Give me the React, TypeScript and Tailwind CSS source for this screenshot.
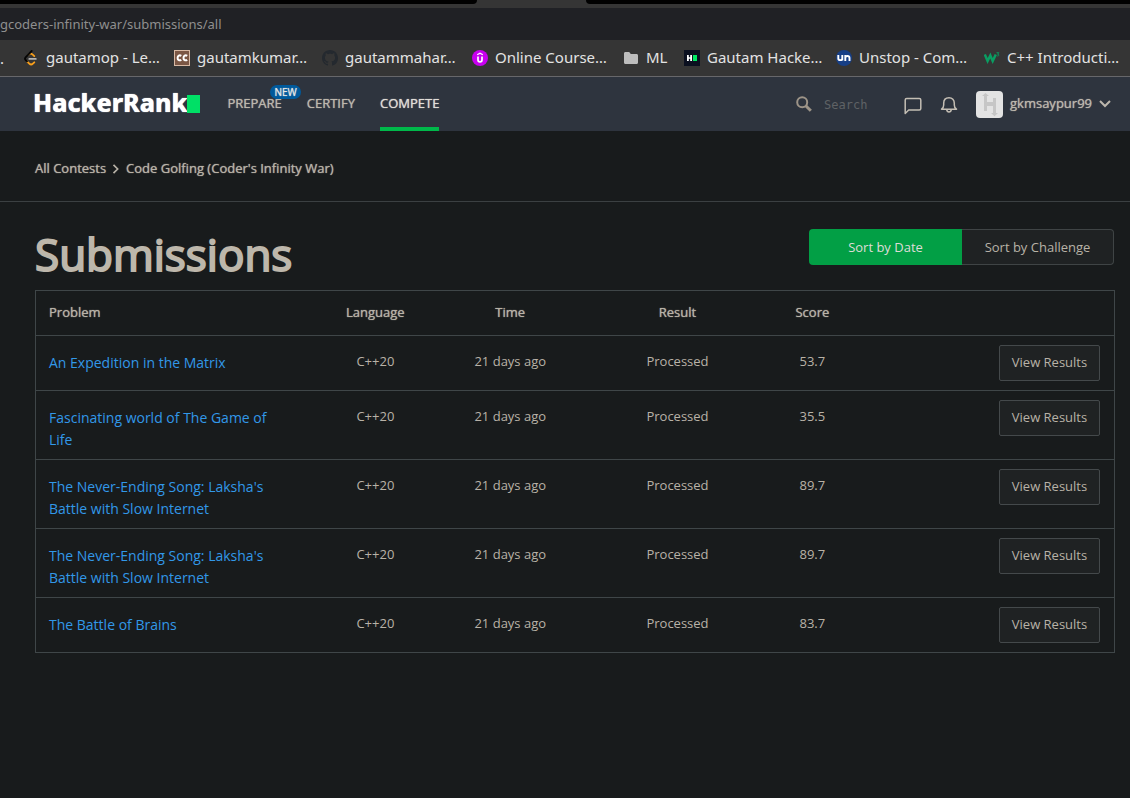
import React from "react";

type Bookmark = { icon: React.ReactNode; label: string; width: string };

const bookmarks: Bookmark[] = [
  { icon: <LeetCodeIcon />, label: "gautamop - Le…", width: "w-[151px]" },
  { icon: <CodeChefIcon />, label: "gautamkumar…", width: "w-[148px]" },
  { icon: <GitHubIcon />, label: "gautammahar…", width: "w-[150px]" },
  { icon: <UdemyIcon />, label: "Online Course…", width: "w-[151px]" },
  { icon: <FolderIcon />, label: "ML", width: "w-[61px]" },
  { icon: <HackerRankIcon />, label: "Gautam Hacke…", width: "w-[152px]" },
  { icon: <UnstopIcon />, label: "Unstop - Com…", width: "w-[148px]" },
  { icon: <W3Icon />, label: "C++ Introducti…", width: "w-[144px]" },
];

const submissions = [
  { problem: "An Expedition in the Matrix", score: "53.7" },
  { problem: "Fascinating world of The Game of Life", score: "35.5" },
  { problem: "The Never-Ending Song: Laksha's Battle with Slow Internet", score: "89.7" },
  { problem: "The Never-Ending Song: Laksha's Battle with Slow Internet", score: "89.7" },
  { problem: "The Battle of Brains", score: "83.7" },
];

function LeetCodeIcon() {
  return (
    <svg className="size-4" viewBox="0 0 16 16" fill="none" strokeLinecap="round" strokeLinejoin="round" strokeWidth="1.8">
      <path d="M5.5 4.600c1.300-1.200 3-1.100 4.200 0l1.600 1.500M4 11.300l2.300 2.400c1 1 2.600 1 3.600 0l1.400-1.400" stroke="#f89f1b" />
      <path d="M8.700 1 2.600 7.300a2 2 0 0 0 0 2.700L4 11.400" stroke="#050505" />
      <path d="M6.300 8.900h6.500" stroke="#b3b3b3" />
    </svg>
  );
}

function CodeChefIcon() {
  return (
    <svg className="size-4" viewBox="0 0 16 16">
      <rect x=".5" y=".5" width="15" height="15" fill="#7b5745" stroke="#d8b9a4" />
      <path d="M7.300 5.900C5.500 4.700 3.600 5.700 3.600 7.900s1.900 3.100 3.700 1.900M13.200 5.900C11.400 4.700 9.500 5.700 9.500 7.900s1.900 3.100 3.700 1.900" fill="none" stroke="#fff" strokeWidth="2" />
    </svg>
  );
}

function GitHubIcon() {
  return (
    <svg className="size-4" viewBox="0 0 16 16" fill="#24292f">
      <path d="M8 0C3.580 0 0 3.580 0 8c0 3.540 2.290 6.530 5.470 7.590.4.070.55-.17.55-.38 0-.19-.01-.82-.01-1.490-2.010.37-2.530-.49-2.690-.94-.09-.23-.48-.94-.82-1.130-.28-.15-.68-.52-.01-.53.63-.01 1.080.58 1.230.82.72 1.210 1.870.87 2.330.66.070-.52.28-.87.51-1.070-1.780-.2-3.640-.89-3.640-3.950 0-.87.31-1.590.82-2.150-.08-.2-.36-1.020.08-2.120 0 0 .67-.21 2.200.82.64-.18 1.320-.27 2-.27s1.360.09 2 .27c1.530-1.040 2.200-.82 2.200-.82.44 1.100.16 1.920.08 2.120.51.56.82 1.270.82 2.150 0 3.070-1.870 3.750-3.650 3.950.29.25.54.73.54 1.480 0 1.070-.01 1.930-.01 2.200 0 .21.15.46.55.38A8.010 8.010 0 0 0 16 8c0-4.420-3.580-8-8-8Z" />
    </svg>
  );
}

function UdemyIcon() {
  return (
    <svg className="size-4" viewBox="0 0 16 16" fill="none" stroke="#fff">
      <circle cx="8" cy="8" r="8" fill="#c800f0" stroke="none" />
      <path d="M5.200 4.800 8 3.200l2.800 1.600" strokeWidth="1.300" />
      <path d="M6 6.500v3.600c0 2.400 4 2.400 4 0V6.500" strokeWidth="1.700" />
    </svg>
  );
}

function FolderIcon() {
  return (
    <svg className="size-4" viewBox="0 0 16 16" fill="#bdbdbd">
      <path d="M1 3.500C1 2.700 1.600 2 2.400 2h3.800l1.600 2h5.800c.8 0 1.400.7 1.400 1.500v7c0 .8-.6 1.500-1.400 1.500H2.400C1.600 14 1 13.300 1 12.500z" />
    </svg>
  );
}

function HackerRankIcon() {
  return (
    <svg className="size-4" viewBox="0 0 16 16">
      <rect width="16" height="16" fill="#0b1020" />
      <path d="M3 5h1.800v2.200h1.400V5H8v6H6.200V8.800H4.800V11H3z" fill="#fff" />
      <rect x="9" y="5" width="4" height="6" fill="#00ea64" />
    </svg>
  );
}

function UnstopIcon() {
  return (
    <svg className="size-4" viewBox="0 0 16 16" fill="none" stroke="#fff" strokeWidth="1.900">
      <circle cx="8" cy="8" r="8" fill="#173f86" stroke="none" />
      <path d="M2.300 5v3.500c0 2.200 4 2.200 4 0V5v5.500M9.300 10.900V5v3c0-2.600 4.200-2.600 4.200 0v2.900" />
    </svg>
  );
}

function W3Icon() {
  return (
    <svg className="size-4" viewBox="0 0 16 16" fill="none" stroke="#0a9d62">
      <path d="M.8 4.500 3.600 11 6.300 5.500 8.700 11l3.100-6.500" strokeWidth="2.500" />
      <path d="M12.500 2.700h2.300l-1.200 1.500c1.800 0 1.600 2-.3 1.800" strokeWidth=".9" />
    </svg>
  );
}

function SearchIcon() {
  return (
    <svg className="size-4" viewBox="0 0 16 16" fill="none" stroke="#9d9488">
      <circle cx="6.200" cy="6.200" r="5" strokeWidth="2" />
      <path d="m10 10 4.800 4.800" strokeWidth="3" />
    </svg>
  );
}

function ChatIcon() {
  return (
    <svg className="h-[18px] w-[18px]" viewBox="0 0 18 18" fill="none" stroke="#c4beb4" strokeWidth="1.500" strokeLinejoin="round">
      <path d="M1.200 16.500V3c0-.9.6-1.500 1.500-1.500h12.600c.9 0 1.500.6 1.500 1.500v8.500c0 .9-.6 1.500-1.500 1.500H4.700z" />
    </svg>
  );
}

function BellIcon() {
  return (
    <svg className="h-[18px] w-[18px]" viewBox="0 0 18 18" fill="none" stroke="#c4beb4" strokeWidth="1.500" strokeLinejoin="round">
      <path d="M1.500 13.200h15c-1.700-1-2.200-2.300-2.200-4.200V7.300C14.300 4 12.200 1.800 9 1.800S3.700 4 3.700 7.300V9c0 1.900-.5 3.200-2.200 4.200zM6.800 13.500c0 3.200 4.400 3.200 4.400 0" />
    </svg>
  );
}

function Avatar() {
  return (
    <svg className="size-[27px]" viewBox="0 0 27 27">
      <rect width="27" height="27" rx="4" fill="#e3e3e3" />
      <path d="M8 5H6L9.500 2 13 5h-2v6h6V7h3v15h2l-3.500 3.200L15 22h2v-7h-6v5H8z" fill="#c6c6c6" />
    </svg>
  );
}

function Chevron({ className, d }: { className: string; d: string }) {
  return (
    <svg className={className} viewBox="0 0 12 12" fill="none" stroke="currentColor" strokeWidth="2">
      <path d={d} />
    </svg>
  );
}

function BrowserChrome() {
  return (
    <div className="border-b border-[#67676a] bg-[#353535] font-['Noto_Sans',sans-serif]">
      <div className="flex h-1">
        <div className="w-[477px] rounded-br bg-black" />
        <div className="w-[109px]" />
        <div className="flex-1 rounded-bl bg-black" />
      </div>
      <div className="mt-1 flex h-8 items-center overflow-hidden bg-[#202125] pt-0.5 text-[13px] text-[#8f8f8f]">
        <span className="whitespace-nowrap">gcoders-infinity-war/submissions/all</span>
      </div>
      <nav aria-label="Bookmarks" className="flex h-9 items-center overflow-hidden whitespace-nowrap text-[15px] text-[#e3e3e3]">
        <span className="w-[23px] shrink-0">.</span>
        {bookmarks.map((b) => (
          <a key={b.label} href="#" className={`flex shrink-0 items-center gap-[7px] ${b.width}`}>
            <span className="shrink-0">{b.icon}</span>
            <span className="pb-0.5">{b.label}</span>
          </a>
        ))}
      </nav>
    </div>
  );
}

function Header() {
  return (
    <header className="flex h-[54px] items-stretch bg-[#2e343e] pr-[19px] pl-[33px] text-[13px] text-[#bdb7ad]">
      <a href="#" className="flex items-center text-white">
        <span className="pb-0.5 font-['Noto_Sans',sans-serif] text-[25px] font-extrabold [text-shadow:0_0_1px_currentColor]">HackerRank</span>
        <span className="h-[18px] w-[13px] bg-[#00e066]" />
      </a>
      <nav aria-label="Main" className="ml-[27px] flex gap-[25px] [text-shadow:0_0_1px_currentColor]">
        <a href="#" className="relative flex items-center">
          PREPARE
          <span className="absolute top-[8px] left-[43px] rounded-full bg-[#005a9c] px-1 text-[10px] leading-[14px] text-[#e8e6e3]">NEW</span>
        </a>
        <a href="#" className="flex items-center">CERTIFY</a>
        <a href="#" className="flex items-center border-b-4 border-[#00b84a] pt-1 text-[#e0ddd8]">COMPETE</a>
      </nav>
      <div className="ml-auto flex items-center">
        <label className="flex items-center gap-3">
          <SearchIcon />
          <input type="text" placeholder="Search" aria-label="Search" className="w-[80px] bg-transparent pt-0.5 font-['DejaVu_Sans_Mono',monospace] text-[12px] outline-none placeholder:text-[#5f6265]" />
        </label>
        <button type="button" aria-label="Messages" className="pt-[3px]"><ChatIcon /></button>
        <button type="button" aria-label="Notifications" className="ml-[18px] pt-0.5"><BellIcon /></button>
        <button type="button" className="ml-[18px] flex items-center gap-[7px] [text-shadow:0_0_1px_currentColor]">
          <Avatar />
          gkmsaypur99
          <Chevron className="size-3" d="m1 3 5 5 5-5" />
        </button>
      </div>
    </header>
  );
}

const headCell = "border-b border-[#3f4648] p-0 font-normal [text-shadow:0_0_1px_currentColor]";
const bodyCell = "pt-[14px] text-center leading-[22px]";

export default function App() {
  return (
    <div className="min-h-screen bg-[#181b1c] font-['Open_Sans',sans-serif] text-[13px] text-[#b8b2a7]">
      <BrowserChrome />
      <Header />
      <nav aria-label="Breadcrumb" className="flex h-[71px] items-center gap-[5px] border-b border-[#3b4042] px-[35px] pt-1.5 [text-shadow:0_0_1px_currentColor]">
        <a href="#">All Contests</a>
        <Chevron className="size-[10px]" d="m3 1 5 5-5 5" />
        <a href="#">Code Golfing (Coder's Infinity War)</a>
      </nav>
      <main className="pr-[15px] pl-[35px]">
        <div className="flex h-[88px] items-start justify-between pt-[27px] pr-px">
          <h1 className="text-[44px] leading-[50px] text-[#bdb7ab] [-webkit-text-stroke:2px_#bdb7ab]">Submissions</h1>
          <div className="flex h-9">
            <button type="button" className="w-[153px] rounded-l bg-[#029f45] pt-0.5 text-[#dfdcd7]">Sort by Date</button>
            <button type="button" className="w-[152px] rounded-r border border-l-0 border-[#3f4445] bg-[#1f2223] pt-0.5">Sort by Challenge</button>
          </div>
        </div>
        <table className="w-full table-fixed border-collapse border border-[#3f4648]">
          <colgroup>
            <col className="w-[25%]" />
            <col className="w-[13%]" />
            <col className="w-[12%]" />
            <col className="w-[19%]" />
            <col className="w-[6%]" />
            <col />
          </colgroup>
          <thead>
            <tr className="h-[45px]">
              <th className={`${headCell} text-left`}><span className="ml-[13px]">Problem</span></th>
              <th className={headCell}>Language</th>
              <th className={headCell}>Time</th>
              <th className={headCell}>Result</th>
              <th className={headCell}>Score</th>
              <th className={headCell} aria-label="Actions" />
            </tr>
          </thead>
          <tbody>
            {submissions.map((s, i) => (
              <tr key={i} className="border-b border-[#3f4648] align-top">
                <td className="pt-4 pb-2 pl-[13px] text-[14px] leading-[22px]">
                  <a href="#" className="block w-[240px] text-[#3298e8]">{s.problem}</a>
                </td>
                <td className={bodyCell}>C++20</td>
                <td className={bodyCell}>21 days ago</td>
                <td className={bodyCell}>Processed</td>
                <td className={bodyCell}>{s.score}</td>
                <td className="pt-[9px] pr-[14px] pb-[9px] text-right">
                  <button type="button" className="h-9 w-[101px] rounded-xs border border-[#44494b] bg-[#1f2223] align-top">View Results</button>
                </td>
              </tr>
            ))}
          </tbody>
        </table>
      </main>
    </div>
  );
}
